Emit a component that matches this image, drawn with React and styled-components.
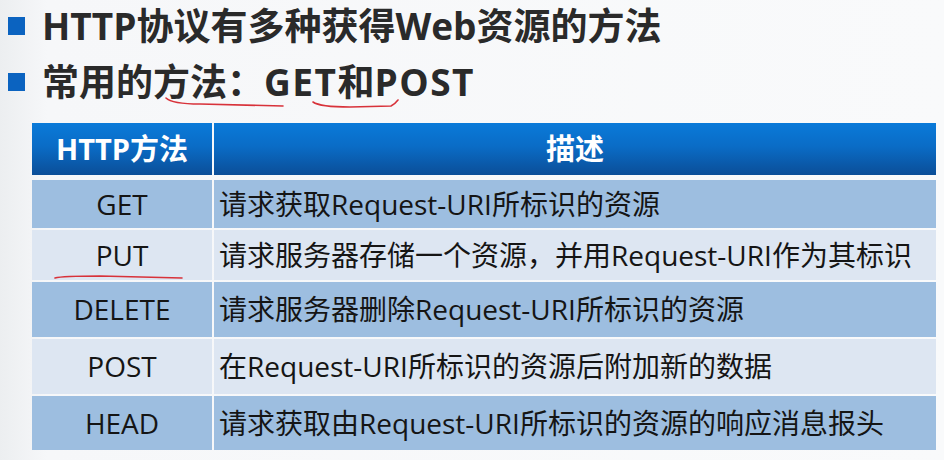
import React from 'react';
import styled, { createGlobalStyle } from 'styled-components';

const Global = createGlobalStyle`
  html, body { margin: 0; padding: 0; }
  body {
    background: #f6f7f9;
    font-family: "Open Sans", "Noto Sans CJK SC", sans-serif;
  }
`;

const Slide = styled.div`
  position: relative;
  width: 944px;
  height: 460px;
  overflow: hidden;
  box-sizing: border-box;
  padding: 0 0 0 8px;
  background: linear-gradient(90deg, #eceef0 0%, #f6f7f9 5%, #f9fafb 100%);
`;

const Bullets = styled.div`
  display: flex;
  flex-direction: column;
  gap: 4px;
`;

const BulletRow = styled.div`
  display: flex;
  align-items: center;
  gap: 17px;
  height: 52px;
`;

const Square = styled.span`
  width: 17px;
  height: 18px;
  background: #0b63c0;
  flex: none;
`;

const Title = styled.span`
  font-family: "Open Sans", "Noto Sans CJK SC", sans-serif;
  font-weight: 700;
  font-size: 37px;
  line-height: 54px;
  color: #2a2a2a;
  white-space: nowrap;
  flex: none;
`;

const Latin = styled.span`
  letter-spacing: 1.5px;
`;

const Table = styled.div`
  margin: 15px 0 0 24px;
  width: 904px;
  display: grid;
  grid-template-columns: 180px 722px;
  column-gap: 2px;
`;

const HeadCell = styled.div`
  height: 52px;
  margin-bottom: 5px;
  display: flex;
  align-items: center;
  justify-content: center;
  background: linear-gradient(180deg, #0a7ad9 0%, #0a6cc6 45%, #0b4e98 100%);
  color: #fff;
  font-weight: 700;
  font-size: 29px;
  line-height: 1.3;
`;

const Cell = styled.div`
  height: ${p => p.$h}px;
  margin-bottom: 2px;
  display: flex;
  align-items: center;
  justify-content: ${p => (p.$center ? 'center' : 'flex-start')};
  padding-left: ${p => (p.$center ? 0 : 5)}px;
  background: ${p => (p.$dark ? '#9dbee0' : '#dde6f2')};
  color: #151515;
  font-size: 28px;
  line-height: 1.3;
  white-space: nowrap;
`;

const Marks = styled.svg`
  position: absolute;
  left: 0;
  top: 0;
  width: 944px;
  height: 460px;
  pointer-events: none;
`;

const rows = [
  { m: 'GET', d: '请求获取Request-URI所标识的资源', h: 48 },
  { m: 'PUT', d: '请求服务器存储一个资源，并用Request-URI作为其标识', h: 50 },
  { m: 'DELETE', d: '请求服务器删除Request-URI所标识的资源', h: 55 },
  { m: 'POST', d: '在Request-URI所标识的资源后附加新的数据', h: 55 },
  { m: 'HEAD', d: '请求获取由Request-URI所标识的资源的响应消息报头', h: 54 },
];

export default function App() {
  return (
    <>
      <Global />
      <Slide>
        <Bullets>
          <BulletRow>
            <Square />
            <Title>HTTP协议有多种获得Web资源的方法</Title>
          </BulletRow>
          <BulletRow>
            <Square />
            <Title>常用的方法：<Latin>GET</Latin>和<Latin>POST</Latin></Title>
          </BulletRow>
        </Bullets>
        <Table>
          <HeadCell>HTTP方法</HeadCell>
          <HeadCell>描述</HeadCell>
          {rows.map((r, i) => (
            <React.Fragment key={r.m}>
              <Cell $center $dark={i % 2 === 0} $h={r.h}>{r.m}</Cell>
              <Cell $dark={i % 2 === 0} $h={r.h}>{r.d}</Cell>
            </React.Fragment>
          ))}
        </Table>
        <Marks viewBox="0 0 944 460">
          <g fill="none" stroke="#d8323a" strokeWidth="1.6" strokeLinecap="round">
            <path d="M166 98 Q172 104 200 104 L283 106" />
            <path d="M313 102 Q320 107 350 107 L391 106 Q395 104 398 100" />
            <path d="M55 278 Q62 276 100 276 L182 278" />
          </g>
        </Marks>
      </Slide>
    </>
  );
}
